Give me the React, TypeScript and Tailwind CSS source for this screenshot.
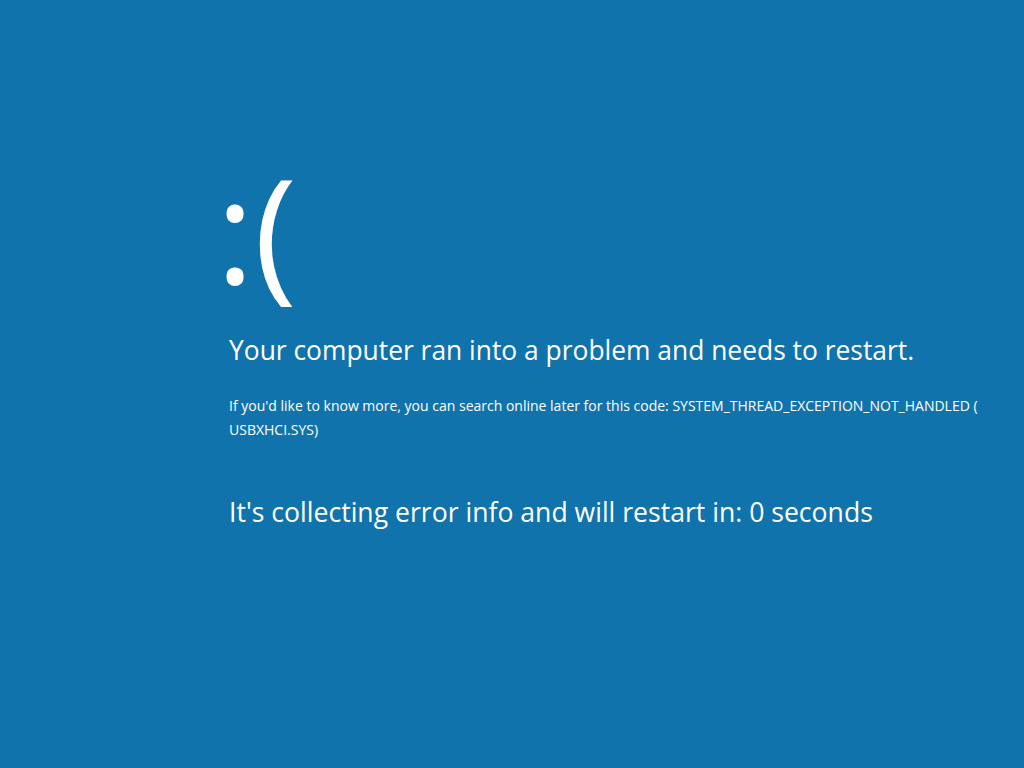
export default function App() {
  return (
    <div className="w-[1024px] h-[768px] bg-[#1173ab] text-white font-['Segoe_UI','Open_Sans',sans-serif] overflow-hidden">
      <div className="pl-[216px] pr-[30px] pt-[138px] flex flex-col">
        <div className="text-[145px] leading-[180px] h-[180px]">:(</div>
        <div className="mt-[14px] pl-[13px] text-[26.4px] leading-[36px]">Your computer ran into a problem and needs to restart.</div>
        <div className="mt-[26px] pl-[13px] text-[14px] leading-[24px]">
          If you'd like to know more, you can search online later for this code: SYSTEM_THREAD_EXCEPTION_NOT_HANDLED ( USBXHCI.SYS)
        </div>
        <div className="mt-[52px] pl-[13px] text-[26.6px] leading-[36px]">It's collecting error info and will restart in: 0 seconds</div>
      </div>
    </div>
  );
}
